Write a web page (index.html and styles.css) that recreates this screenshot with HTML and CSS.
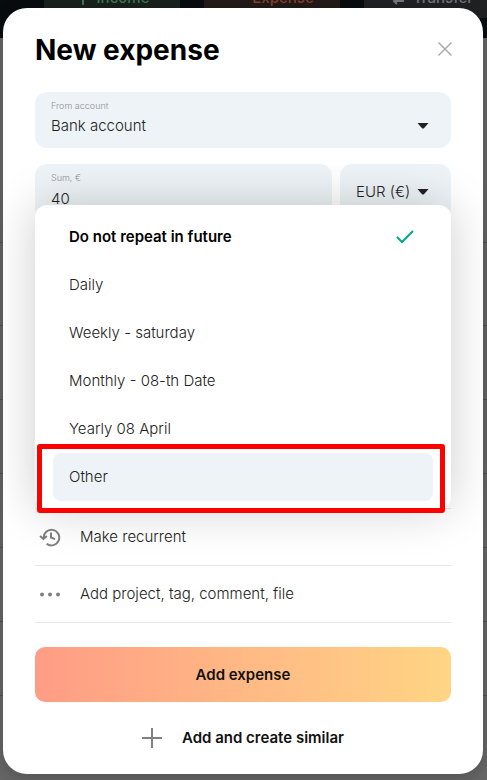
FILE: index.html
```html
<!DOCTYPE html>
<html lang="en">
<head>
<meta charset="utf-8">
<meta name="viewport" content="width=device-width, initial-scale=1">
<title>New expense</title>
<link rel="stylesheet" href="styles.css">
</head>
<body>
<div class="screen">
  <div class="page">
    <nav class="topbar">
      <button class="tab tab-income" type="button">
        <svg width="16" height="16" viewBox="0 0 16 16" fill="none" stroke="currentColor" stroke-width="2"><path d="M8 15V2M4 6l4-4 4 4"/></svg>
        Income
      </button>
      <button class="tab tab-expense" type="button">
        <svg width="16" height="16" viewBox="0 0 16 16" fill="none" stroke="currentColor" stroke-width="2"><path d="M8 0v8M5 5l3 3 3-3"/></svg>
        Expense
      </button>
      <button class="tab tab-transfer" type="button">
        <svg width="16" height="16" viewBox="0 0 16 16" fill="none" stroke="currentColor" stroke-width="2"><path d="M2 5h11M10 2l3 3M13 11H3M6 8l-3 3 3 3"/></svg>
        Transfer
      </button>
    </nav>
    <div class="rows">
      <div class="row row-first"></div>
      <div class="row row-tall"></div>
      <div class="row"></div>
      <div class="row"></div>
      <div class="row"></div>
      <div class="row"></div>
      <div class="row"></div>
    </div>
  </div>

  <form class="dialog">
    <header class="dialog-head">
      <h1>New expense</h1>
      <button class="close" type="button" aria-label="Close">
        <svg width="14" height="14" viewBox="0 0 14 14" fill="none" stroke="currentColor" stroke-width="1.4"><path d="M.5.5l13 13M13.5.5l-13 13"/></svg>
      </button>
    </header>

    <div class="field">
      <label for="account">From account</label>
      <select id="account"><option>Bank account</option></select>
      <svg class="caret" width="12" height="6" viewBox="0 0 12 6"><path d="M.5 0h11L7 5.2Q6 6 5 5.2z" fill="currentColor"/></svg>
    </div>

    <div class="sum-row">
      <div class="field">
        <label for="sum">Sum, €</label>
        <input id="sum" type="text" value="40">
      </div>
      <div class="field field-currency">
        <select id="currency" aria-label="Currency"><option>EUR (€)</option></select>
        <svg class="caret" width="12" height="6" viewBox="0 0 12 6"><path d="M.5 0h11L7 5.2Q6 6 5 5.2z" fill="currentColor"/></svg>
      </div>
    </div>

    <div class="menu" role="listbox">
      <button class="option selected" type="button" role="option" aria-selected="true">
        Do not repeat in future
        <svg width="20" height="16" viewBox="0 0 20 16" fill="none" stroke="currentColor" stroke-width="2"><path d="M2 8l5 5L18 2"/></svg>
      </button>
      <button class="option" type="button" role="option">Daily</button>
      <button class="option" type="button" role="option">Weekly - saturday</button>
      <button class="option" type="button" role="option">Monthly - 08-th Date</button>
      <button class="option" type="button" role="option">Yearly 08 April</button>
      <button class="option active" type="button" role="option">Other<span class="marker"></span></button>
    </div>

    <div class="extras">
      <button class="extra" type="button">
        <svg width="22" height="20" viewBox="0 0 22 20" fill="none" stroke="currentColor" stroke-width="2"><path d="M4.7 11.5A7.8 7.8 0 1 1 7.6 16.7M1 9l3.4 3 3.4-3M12 5.5v5l4 1.6"/></svg>
        Make recurrent
      </button>
      <button class="extra" type="button">
        <svg width="22" height="20" viewBox="0 0 22 20" fill="currentColor"><circle cx="3" cy="10.5" r="2"/><circle cx="11" cy="10.5" r="2"/><circle cx="19" cy="10.5" r="2"/></svg>
        Add project, tag, comment, file
      </button>
    </div>

    <button class="submit" type="submit">Add expense</button>
    <button class="similar" type="button">
      <svg width="20" height="20" viewBox="0 0 20 20" fill="none" stroke="currentColor" stroke-width="2"><path d="M10 0v20M0 10h20"/></svg>
      Add and create similar
    </button>
  </form>
</div>
</body>
</html>
```

FILE: styles.css
```css
* {
  box-sizing: border-box;
}

body {
  margin: 0;
  background: #666;
  color: #000;
  font: 300 15px/20px Inter, sans-serif;
}

button,
input,
select {
  margin: 0;
  padding: 0;
  border: 0;
  background: none;
  color: inherit;
  font: inherit;
}

svg {
  flex: none;
}

.screen {
  display: grid;
  grid-template-columns: minmax(0, 1fr);
  min-height: 100vh;
}

.page,
.dialog {
  grid-area: 1 / 1;
}

.page {
  overflow: hidden;
}

.topbar {
  display: flex;
  align-items: flex-start;
  gap: 24px;
  height: 38px;
  padding-left: 44px;
  background: #090c0e;
}

.tab {
  display: flex;
  flex: none;
  align-items: center;
  justify-content: center;
  gap: 6px;
  width: 136px;
  height: 40px;
  margin-top: -22px;
  font-weight: 500;
}

.tab-income {
  background: #18211e;
  color: #3d7650;
}

.tab-expense {
  background: #211a18;
  color: #84402f;
}

.tab-transfer {
  background: #1f2123;
  color: #747577;
}

.row {
  height: 74px;
  border-bottom: 1px solid #505050;
}

.row-first {
  height: 205px;
}

.row-tall {
  height: 83px;
}

.dialog {
  display: flex;
  flex-direction: column;
  align-self: start;
  margin: 8px 4px 6px 3px;
  padding: 24px 32px 16px;
  border-radius: 24px;
  background: #fff;
  box-shadow: 0 4px 16px rgba(0, 0, 0, 0.2);
}

.dialog-head {
  display: flex;
  align-items: flex-start;
  justify-content: space-between;
  height: 60px;
}

h1 {
  margin: 0;
  font-size: 28px;
  font-weight: 650;
  line-height: 36px;
}

.close {
  display: flex;
  margin-right: -1px;
  padding: 10px 0 8px 8px;
  color: #a6a6a6;
}

.field {
  display: grid;
  grid-template-columns: minmax(0, 1fr);
  align-content: start;
  flex: 1 1 auto;
  height: 56px;
  padding: 8px 16px;
  border-radius: 12px;
  background: #edf3f6;
  color: #222;
}

.field label {
  grid-area: 1 / 1;
  color: #8d9194;
  font-size: 9px;
  line-height: 12px;
}

.field select,
.field input {
  grid-area: 2 / 1;
  width: 100%;
  height: 28px;
  appearance: none;
  outline: 0;
}

.field .caret {
  grid-area: 2 / 1;
  align-self: center;
  justify-self: end;
  margin-right: 6px;
  pointer-events: none;
}

.dialog > .field {
  flex: none;
}

.sum-row {
  display: flex;
  gap: 8px;
  margin-top: 16px;
}

.sum-row .field-currency {
  flex: none;
  align-content: center;
  width: 111px;
}

.menu {
  position: relative;
  margin-top: -15px;
  padding: 8px 18px;
  border-radius: 12px;
  background: #fff;
  box-shadow: 0 0 48px rgba(0, 0, 0, 0.2);
}

.option {
  position: relative;
  display: flex;
  align-items: center;
  justify-content: space-between;
  width: 100%;
  height: 48px;
  padding: 0 16px;
  border-radius: 8px;
  color: #222;
}

.option.selected {
  color: #000;
  font-weight: 600;
}

.option svg {
  margin-right: 2px;
  color: #00ab84;
}

.option.active {
  background: #edf3f6;
}

.marker {
  position: absolute;
  inset: -9px -12px -12px -16px;
  border: 5px solid #f00;
  border-radius: 3px;
}

.extras {
  margin-top: -1px;
  border-top: 1px solid #e6e6e6;
}

.extra {
  display: flex;
  align-items: center;
  gap: 19px;
  width: 100%;
  height: 57px;
  padding: 0 4px;
  border-bottom: 1px solid #e6e6e6;
  color: #222;
}

.extra svg {
  color: #808080;
}

.submit {
  height: 55px;
  margin-top: 24px;
  border-radius: 10px;
  background: linear-gradient(90deg, #ff9c85, #ffd584);
  color: #111;
  font-weight: 600;
}

.similar {
  display: flex;
  align-items: center;
  align-self: center;
  gap: 20px;
  height: 40px;
  margin-top: 16px;
  color: #111;
  font-weight: 600;
}

.similar svg {
  color: #808080;
}
```
